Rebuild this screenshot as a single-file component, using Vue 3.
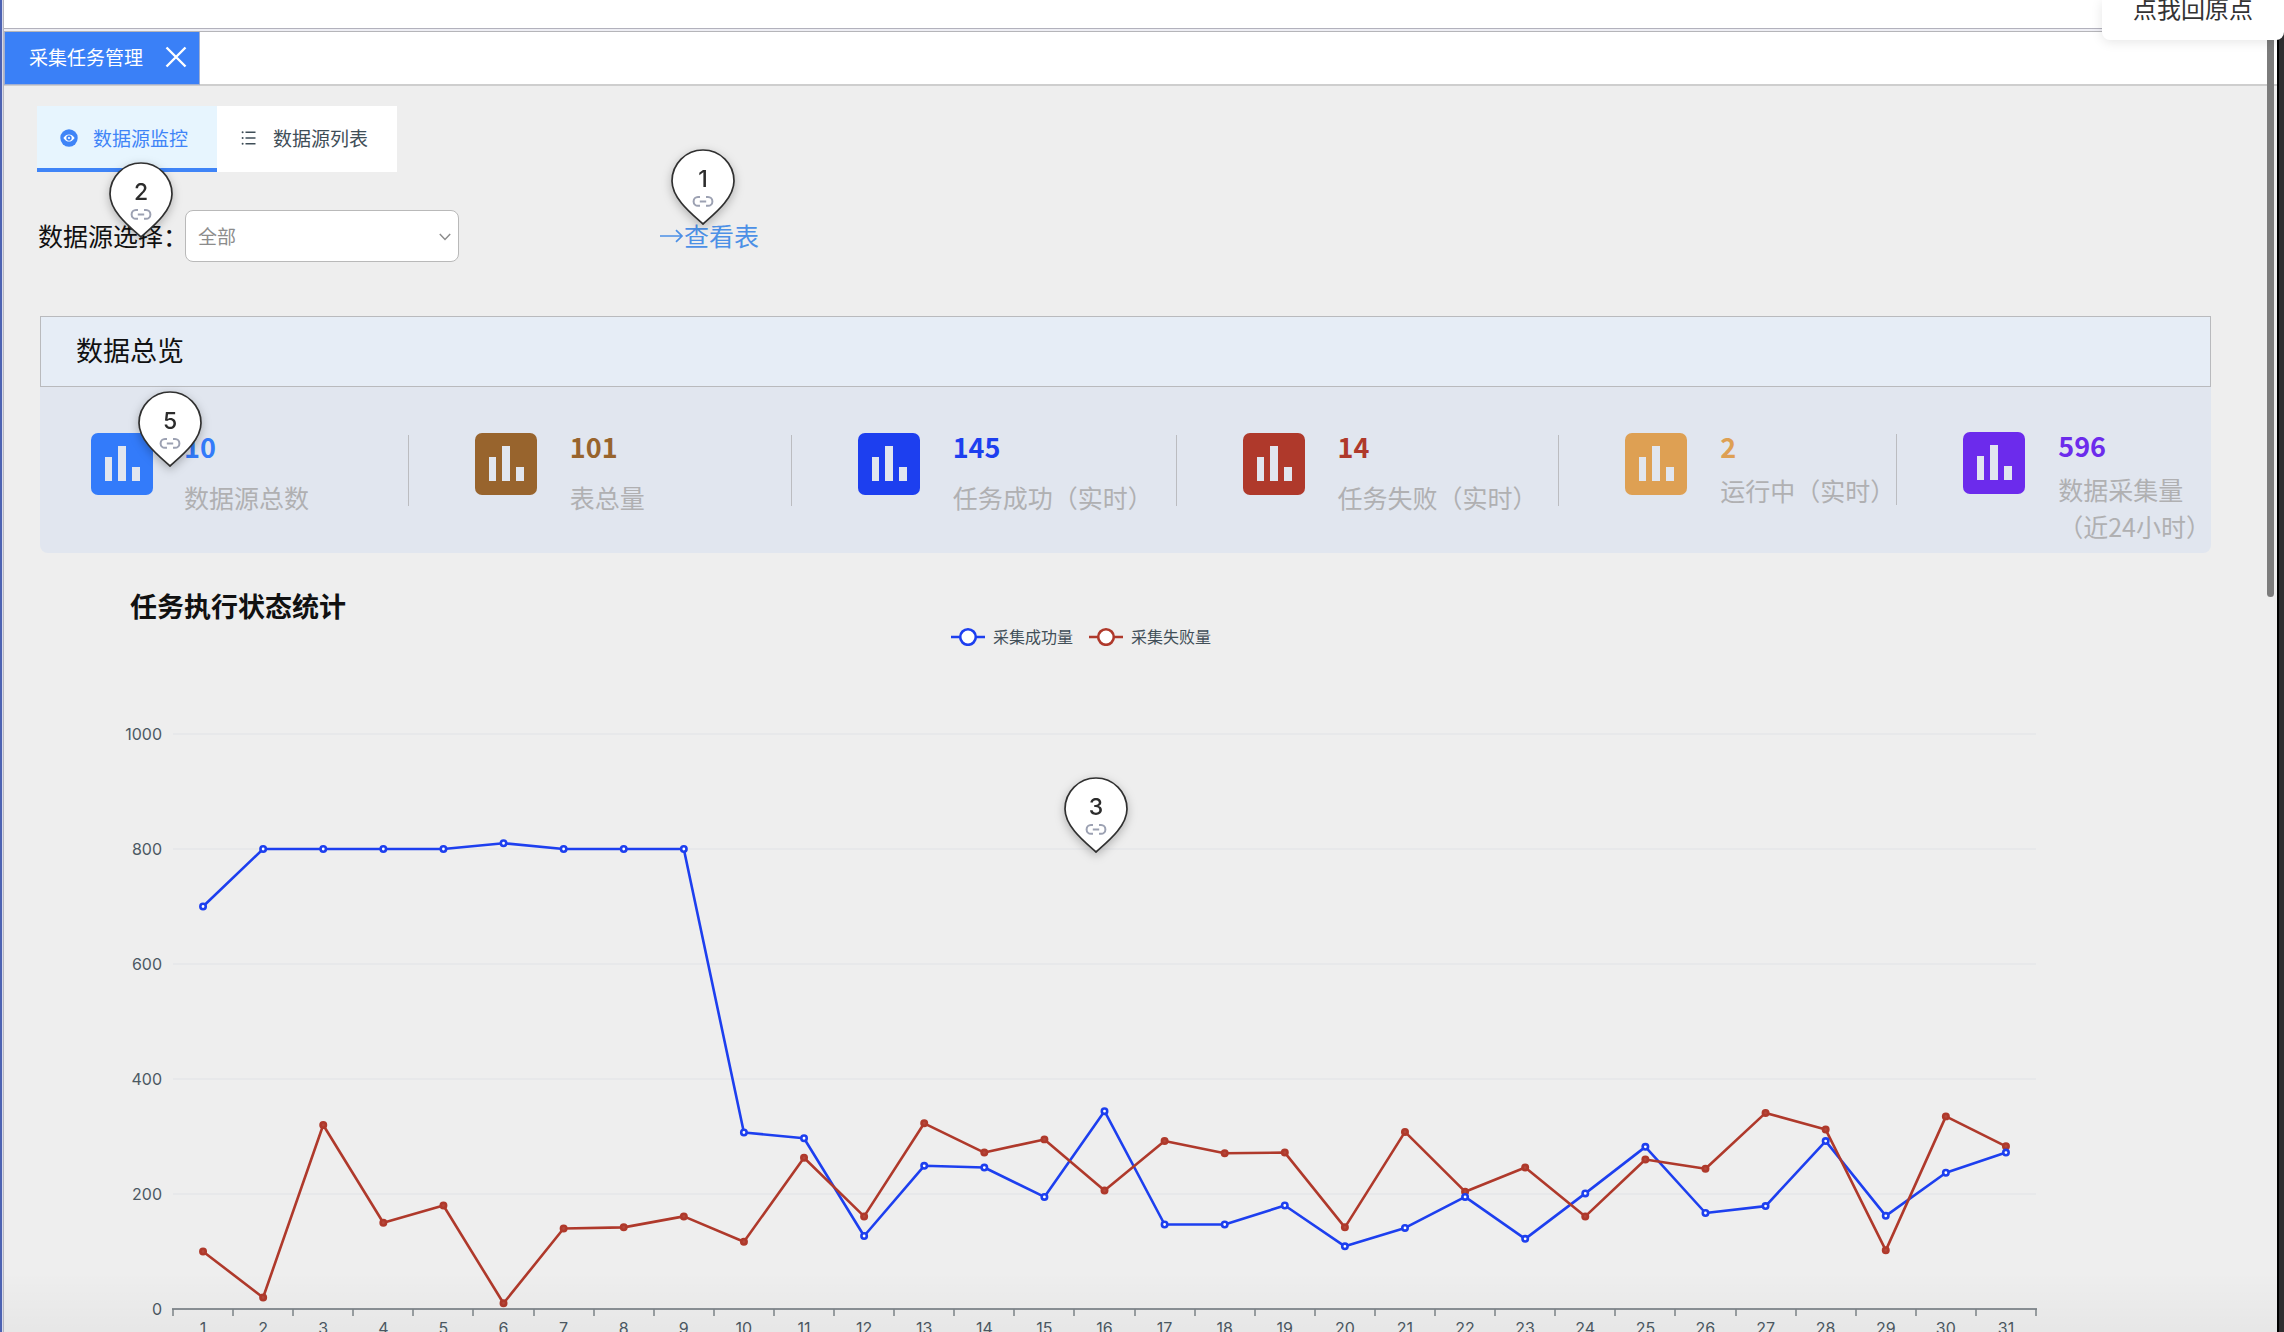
<script setup>
import { ref } from 'vue'

const source = ref('全部')

const stats = [
  { value: '10', label: '数据源总数', color: '#337bfa' },
  { value: '101', label: '表总量', color: '#98642d' },
  { value: '145', label: '任务成功（实时）', color: '#1d3fef' },
  { value: '14', label: '任务失败（实时）', color: '#af392b' },
  { value: '2', label: '运行中（实时）', color: '#dea053', compact: true },
  { value: '596', label: '数据采集量\n（近24小时）', color: '#6c2bec', compact: true, raised: true },
]

const success = [700, 800, 800, 800, 800, 810, 800, 800, 800, 307, 297, 127, 249, 246, 195, 344, 147, 147, 180, 109, 141, 195, 122, 201, 282, 167, 179, 292, 162, 237, 272]
const failed = [100, 20, 320, 150, 180, 10, 140, 142, 161, 117, 263, 161, 323, 272, 295, 206, 292, 271, 272, 142, 308, 204, 246, 161, 260, 244, 341, 312, 102, 335, 283]

const plot = { left: 133, right: 1996, top: 96, bottom: 671 }
const step = (plot.right - plot.left) / 31
const px = (i) => plot.left + step * (i + 0.5)
const py = (v) => plot.bottom - (v / 1000) * (plot.bottom - plot.top)
const toPoints = (list) => list.map((v, i) => `${px(i).toFixed(1)},${py(v).toFixed(1)}`).join(' ')

const levels = [1000, 800, 600, 400, 200, 0]
const ticks = Array.from({ length: 32 }, (_, i) => Math.round(plot.left + step * i))

const pins = [
  { n: 1, name: 'link' },
  { n: 2, name: 'tabs' },
  { n: 5, name: 'total' },
  { n: 3, name: 'chart' },
]
</script>

<template>
  <div class="window">
    <main class="page">
      <div class="strip"></div>
      <nav class="window-tabs">
        <div class="window-tab">
          <span>采集任务管理</span>
          <button class="close" type="button" aria-label="关闭">
            <svg viewBox="0 0 22 22" width="22" height="22"><path d="M1.5 1.5 20.5 20.5M20.5 1.5 1.5 20.5" stroke="#fff" stroke-width="2.4" fill="none" /></svg>
          </button>
        </div>
      </nav>

      <section class="content">
        <div class="tabs">
          <button class="tab active" type="button">
            <svg viewBox="0 0 18 18" width="18" height="18">
              <circle cx="9" cy="9" r="8.7" fill="#3f84f7" />
              <path d="M3.4 9C5 6.5 7 5.4 9 5.4S13 6.5 14.600 9C13 11.500 11 12.600 9 12.600S5 11.500 3.400 9Z" fill="#fff" />
              <circle cx="9" cy="9" r="2.700" fill="#3f84f7" />
              <circle cx="9" cy="9" r="1.100" fill="#fff" />
            </svg>
            数据源监控
          </button>
          <button class="tab" type="button">
            <svg viewBox="0 0 18 16" width="18" height="16" fill="#3f4e58">
              <path d="M5.500 1.500h10v1.600h-10zM5.500 7.200h10v1.600h-10zM5.500 12.900h10v1.600h-10z" />
              <circle cx="2.600" cy="2.300" r="1" /><circle cx="2.600" cy="8" r="1" /><circle cx="2.600" cy="13.700" r="1" />
            </svg>
            数据源列表
          </button>
        </div>

        <div class="filters">
          <label for="source">数据源选择：</label>
          <div class="select-box">
            <select id="source" v-model="source">
              <option>全部</option>
            </select>
            <svg class="chevron" viewBox="0 0 12 8" width="12" height="8"><path d="M.8 1 6 6.400 11.200 1" fill="none" stroke="#8c8c8c" stroke-width="1.500" /></svg>
          </div>
          <a class="view-link" href="#">
            <svg viewBox="0 0 24 16" width="24" height="16"><path d="M0 9H22M16 3.200 22 9 16 14.800" fill="none" stroke="#4c90e6" stroke-width="1.700" /></svg>查看表
          </a>
        </div>

        <section class="overview">
          <h2>数据总览</h2>
          <div class="stats">
            <div v-for="s in stats" :key="s.label" class="stat" :class="{ compact: s.compact, raised: s.raised }">
              <svg class="stat-icon" viewBox="0 0 62 62" width="62" height="62">
                <rect width="62" height="62" rx="7" :fill="s.color" />
                <path d="M14 24h7v24h-7zM27 13h8v35h-8zM41 34h8v14h-8z" fill="#e1e6ef" />
              </svg>
              <div class="stat-text">
                <strong :style="{ color: s.color }">{{ s.value }}</strong>
                <span>{{ s.label }}</span>
              </div>
            </div>
          </div>
        </section>

        <section class="chart">
          <h3>任务执行状态统计</h3>
          <ul class="legend">
            <li>
              <svg viewBox="0 0 36 20" width="36" height="20"><path d="M1 11h34" stroke="#1d3fef" stroke-width="2.600" /><circle cx="18" cy="11" r="7.800" fill="#fff" stroke="#1d3fef" stroke-width="2.600" /></svg>
              采集成功量
            </li>
            <li>
              <svg viewBox="0 0 36 20" width="36" height="20"><path d="M1 11h34" stroke="#af392b" stroke-width="2.600" /><circle cx="18" cy="11" r="7.800" fill="#fff" stroke="#af392b" stroke-width="2.600" /></svg>
              采集失败量
            </li>
          </ul>
          <svg class="plot" viewBox="0 0 2171 710">
            <g v-for="v in levels" :key="v">
              <line v-if="v" :x1="plot.left" :x2="plot.right" :y1="py(v)" :y2="py(v)" stroke="#e5e6e8" stroke-width="1.500" />
              <text class="y-label" x="122" :y="py(v) + 6">{{ v }}</text>
            </g>
            <line :x1="plot.left - 1" :x2="plot.right + 1" :y1="plot.bottom" :y2="plot.bottom" stroke="#697177" stroke-width="1.600" />
            <line v-for="t in ticks" :key="t" :x1="t" :x2="t" :y1="plot.bottom" :y2="plot.bottom + 7" stroke="#7d8489" stroke-width="1.500" />
            <text v-for="n in 31" :key="n" class="x-label" :x="px(n - 1)" :y="plot.bottom + 25">{{ n }}</text>
            <polyline :points="toPoints(success)" fill="none" stroke="#1d3fef" stroke-width="2.600" stroke-linejoin="bevel" />
            <polyline :points="toPoints(failed)" fill="none" stroke="#af392b" stroke-width="2.600" stroke-linejoin="bevel" />
            <circle v-for="(v, i) in failed" :key="'f' + i" :cx="px(i)" :cy="py(v)" r="2.700" fill="#b5483b" stroke="#af392b" stroke-width="2.600" />
            <circle v-for="(v, i) in success" :key="'s' + i" :cx="px(i)" :cy="py(v)" r="2.700" fill="#fff" stroke="#1d3fef" stroke-width="2.600" />
          </svg>
        </section>
      </section>

      <div class="scroll-thumb"></div>
      <div class="fade"></div>
      <button v-for="p in pins" :key="p.n" class="pin" :class="'pin-' + p.name" type="button">
        <svg viewBox="0 0 64 76" width="64" height="76">
          <path d="M32 75C22 66 1 50 1 32A31 31 0 0 1 63 32C63 50 42 66 32 75Z" fill="#fff" stroke="#303030" stroke-width="1.700" />
          <path d="M29 48H27A4.300 4.300 0 0 0 27 56.800H29M35 48H37A4.300 4.300 0 0 1 37 56.800H35M28.800 52.400h6.400" fill="none" stroke="#9ca1b2" stroke-width="2" />
        </svg>
        <span>{{ p.n }}</span>
      </button>
    </main>
    <div class="edge"></div>
    <button class="home" type="button">点我回原点</button>
  </div>
</template>

<style>
body {
  margin: 0;
}
</style>

<style scoped>
* {
  box-sizing: border-box;
}

.window {
  position: relative;
  display: flex;
  height: 100vh;
  overflow: hidden;
  background: #eee;
  color: #111;
  font-family: "Noto Sans CJK SC", sans-serif;
  font-weight: 400;
}

button {
  padding: 0;
  border: 0;
  background: none;
  font: inherit;
}

.page {
  position: relative;
  flex: 1;
  min-width: 0;
  border-left: 2px solid #4c62b2;
  box-shadow: inset 1px 0 #d8daea, inset 2px 0 #b6b6c0;
  padding-left: 2px;
  overflow: hidden;
}

.strip {
  height: 32px;
  background: #fff;
  border-bottom: 1px solid #b5b5b9;
  box-shadow: inset 0 -2px #eeeef4, inset 0 -3px #b2b1bc;
}

.window-tabs {
  display: flex;
  height: 54px;
  background: #fff;
  border-bottom: 2px solid #cecece;
}

.window-tab {
  display: flex;
  align-items: center;
  gap: 22px;
  height: 53px;
  padding: 0 12px 2px 24px;
  background: #3a80f7;
  border: 1px solid #a0afd2;
  border-top: 0;
  color: #fff;
  font-size: 19px;
  line-height: 28px;
}

.close {
  display: flex;
}

.content {
  padding: 20px 66px 0 33px;
}

.tabs {
  display: flex;
}

.tab {
  display: flex;
  align-items: center;
  gap: 15px;
  width: 180px;
  height: 66px;
  padding: 0 0 2px 23px;
  background: #fff;
  color: #3f4e58;
  font-size: 19px;
  line-height: 28px;
}

.tab.active {
  background: #e7f5fe;
  box-shadow: inset 0 -4px #3f84f7;
  color: #3f84f7;
}

.filters {
  display: flex;
  align-items: center;
  height: 52px;
  margin-top: 38px;
  font-size: 25px;
}

.filters label {
  width: 148px;
  padding: 0 0 2px 1px;
  white-space: nowrap;
}

.select-box {
  position: relative;
  width: 274px;
  height: 52px;
}

.select-box select {
  appearance: none;
  width: 100%;
  height: 100%;
  padding: 0 36px 2px 12px;
  border: 1px solid #b9b9b9;
  border-radius: 8px;
  background: #fff;
  color: #8c8c8c;
  font: inherit;
  font-size: 19px;
}

.chevron {
  position: absolute;
  top: 23px;
  right: 8px;
}

.view-link {
  display: flex;
  align-items: center;
  margin-left: 201px;
  padding-bottom: 2px;
  color: #4c90e6;
  text-decoration: none;
}

.overview {
  margin-top: 54px;
  margin-left: 3px;
}

.overview h2 {
  height: 71px;
  margin: 0;
  padding-left: 35px;
  border: 1px solid #b9babd;
  background: #e6edf6;
  font-size: 27px;
  font-weight: 400;
  line-height: 65px;
}

.stats {
  display: grid;
  grid-template-columns: 368fr 383fr 385fr 383fr 338fr 314fr;
  height: 166px;
  padding-top: 46px;
  border-radius: 0 0 8px 8px;
  background: #e1e6ef;
}

.stat {
  position: relative;
  display: flex;
  gap: 33px;
  padding-left: 67px;
}

.stat:first-child {
  gap: 31px;
  padding-left: 51px;
}

.stat + .stat::before {
  content: "";
  position: absolute;
  top: 2px;
  left: 0;
  width: 1px;
  height: 71px;
  background: #bbbcc0;
}

.stat-icon {
  flex: none;
}

.stat-text {
  display: flex;
  flex-direction: column;
  gap: 18px;
  white-space: pre;
}

.stat-text strong {
  font-size: 27px;
  line-height: 28px;
}

.stat-text span {
  color: #b0b0b2;
  font-size: 25px;
  line-height: 37px;
}

.compact .stat-text {
  gap: 11px;
}

.raised {
  margin-top: -1px;
}

.chart {
  margin-left: 3px;
  padding-top: 33px;
}

.chart h3 {
  margin: 0;
  padding-left: 90px;
  font-size: 27px;
  line-height: 40px;
}

.legend {
  display: flex;
  justify-content: center;
  gap: 15px;
  height: 20px;
  margin: 0;
  padding: 0 90px 0 0;
  list-style: none;
  color: #414f58;
  font-size: 16px;
  line-height: 20px;
}

.legend li {
  display: flex;
  align-items: center;
  gap: 7px;
}

.plot {
  display: block;
  width: 100%;
  margin-top: -8px;
  fill: #4c5963;
  font-family: Inter, sans-serif;
  font-size: 16px;
}

.y-label {
  text-anchor: end;
}

.x-label {
  text-anchor: middle;
}

.scroll-thumb {
  position: absolute;
  top: 0;
  right: 3px;
  width: 7px;
  height: 597px;
  border-radius: 4px;
  background: #7c7c7c;
}

.fade {
  position: absolute;
  right: 0;
  bottom: 0;
  left: 2px;
  height: 60px;
  background: linear-gradient(transparent, rgba(0, 0, 0, 0.03));
  pointer-events: none;
}

.edge {
  flex: none;
  width: 7px;
  border-left: 2px solid #000;
  background: #2e2e30;
}

.home {
  position: absolute;
  top: 0;
  right: 0;
  width: 182px;
  height: 40px;
  padding-bottom: 24px;
  border-radius: 0 0 8px 8px;
  background: #fff;
  box-shadow: 0 2px 12px rgba(0, 0, 0, 0.1);
  color: #333;
  font-size: 24px;
  line-height: 14px;
  white-space: nowrap;
}

.pin {
  position: absolute;
  width: 64px;
  height: 76px;
  filter: drop-shadow(0 3px 5px rgba(0, 0, 0, 0.25));
}

.pin svg {
  display: block;
}

.pin span {
  position: absolute;
  top: 16px;
  left: 0;
  width: 100%;
  color: #2c2c2c;
  font-family: Inter, sans-serif;
  font-size: 23px;
  font-weight: 500;
  line-height: 28px;
  text-align: center;
}

.pin-link {
  top: 149px;
  left: 669px;
}

.pin-tabs {
  top: 162px;
  left: 107px;
}

.pin-total {
  top: 391px;
  left: 136px;
}

.pin-chart {
  top: 777px;
  left: 1062px;
}
</style>
